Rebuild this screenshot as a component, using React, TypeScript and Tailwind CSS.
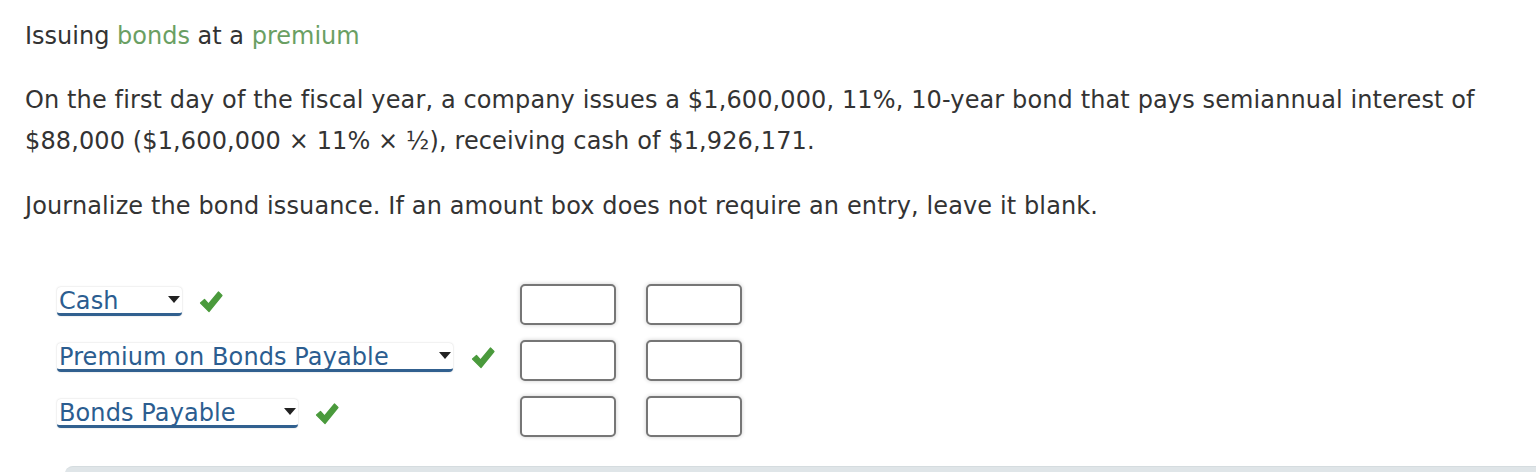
import React from "react"

const FONT = "font-['DejaVu_Sans',Verdana,sans-serif]"

function Check() {
  return (
    <svg width="24" height="24" viewBox="0 0 24 24" className="shrink-0">
      <path
        d="M1.5 13 L5.5 9.5 L9.5 14 L19.5 2 L23 5.5 L10 21.5 Z"
        fill="#4a9a3c"
        stroke="#4a9a3c"
        strokeWidth="1.2"
        strokeLinejoin="round"
      />
    </svg>
  )
}

function AccountSelect({ label, width, checkGap }: { label: string; width: string; checkGap: string }) {
  return (
    <div className="flex items-center">
      <div
        className={`relative ${width} h-[29px] bg-white rounded-[4px] shadow-[0_0_2px_rgba(0,0,0,0.2)] border-b-[3px] border-[#31608f]`}
      >
        <span className="absolute left-[2px] top-0 text-[24px] leading-[29px] tracking-[0.1px] text-[#2b5d90] whitespace-nowrap">
          {label}
        </span>
        <span className="absolute right-[2px] top-[9px] w-0 h-0 border-l-[6px] border-r-[6px] border-t-[7px] border-l-transparent border-r-transparent border-t-[#222]" />
      </div>
      <div className={checkGap}>
        <Check />
      </div>
    </div>
  )
}

function AmountBox() {
  return (
    <div className="w-[96px] h-[41px] rounded-[5px] border-2 border-[#767676] bg-white shadow-[0_0_4px_rgba(0,0,0,0.2)]" />
  )
}

const rows = [
  { label: "Cash", width: "w-[125px]", gap: "ml-[17px]" },
  { label: "Premium on Bonds Payable", width: "w-[396px]", gap: "ml-[18px]" },
  { label: "Bonds Payable", width: "w-[241px]", gap: "ml-[17px]" },
]

export default function App() {
  return (
    <div className={`${FONT} bg-white w-[1536px] h-[472px] overflow-hidden text-[#333]`}>
      <div className="pl-[25px]">
        <h1 className="pt-[16px] text-[24px] leading-[41px] font-normal">
          Issuing <span className="text-[#6a9f63]">bonds</span> at a{" "}
          <span className="text-[#6a9f63]">premium</span>
        </h1>

        <p className="mt-[23px] text-[24px] leading-[41px] tracking-[0.12px] whitespace-nowrap">
          On the first day of the fiscal year, a company issues a $1,600,000, 11%, 10-year bond that pays semiannual interest of
          <br />
          $88,000 ($1,600,000 × 11% × ½), receiving cash of $1,926,171.
        </p>

        <p className="mt-[24px] text-[24px] leading-[41px] tracking-[0.12px]">
          Journalize the bond issuance. If an amount box does not require an entry, leave it blank.
        </p>

        <div className="mt-[57px] flex flex-col">
          {rows.map((r) => (
            <div key={r.label} className="flex items-start h-[56px]">
              <div className="w-[495px] pl-[32px] pt-[3px]">
                <AccountSelect label={r.label} width={r.width} checkGap={r.gap} />
              </div>
              <div className="flex gap-[30px]">
                <AmountBox />
                <AmountBox />
              </div>
            </div>
          ))}
        </div>
      </div>

      <div className="ml-[65px] mt-[14px] h-[20px] bg-[#dfe5e8] rounded-tl-[8px] border-t border-[#d5dcdf]" />
    </div>
  )
}
